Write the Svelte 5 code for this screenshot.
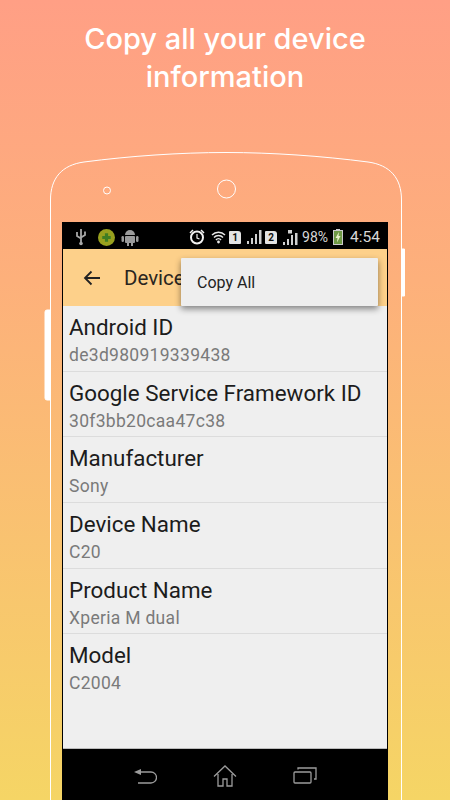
<script>
  let rows = [
    { label: 'Android ID', value: 'de3d980919339438' },
    { label: 'Google Service Framework ID', value: '30f3bb20caa47c38' },
    { label: 'Manufacturer', value: 'Sony' },
    { label: 'Device Name', value: 'C20' },
    { label: 'Product Name', value: 'Xperia M dual' },
    { label: 'Model', value: 'C2004' }
  ];
</script>

<div class="page">
  <h1>Copy all your device<br>information</h1>

  <div class="phone">
    <svg class="outline" width="450" height="648" viewBox="0 0 450 648" fill="none" stroke="#fff">
      <path d="M50.5 648V48C50.5 26 62 13 84 10C130 4 180 0.5 226 0.5C272 0.5 322 4 368 10C390 13 401.500 26 401.500 48V648" />
      <circle cx="107" cy="38.500" r="3.500" />
      <circle cx="226.500" cy="37" r="9" />
      <path d="M402 97h2.500v47H402" fill="#fff" />
      <path d="M50 158h-3a2 2 0 0 0-2 2v86a2 2 0 0 0 2 2h3z" fill="#fff" />
    </svg>

    <div class="screen">
      <div class="status">
        <div class="status-left">
          <svg width="12" height="18" viewBox="0 0 12 18" fill="none" stroke="#a8a8a8" stroke-width="1.800">
            <path d="M6 1v16M2 4v4l4 2.500M10 3.500V7L6 9.500" />
            <circle cx="6" cy="15.500" r="1.800" fill="#a8a8a8" stroke="none" />
          </svg>
          <svg class="ball" width="17" height="17" viewBox="0 0 16 16">
            <circle cx="8" cy="8" r="8" fill="#98a01e" />
            <path d="M6.500 4h3v2.500H12v3H9.500V12h-3V9.500H4v-3h2.500z" fill="#3f7d22" />
          </svg>
          <svg width="18" height="18" viewBox="0 0 18 18" fill="#9b9b9b">
            <path d="M4 7a5 5 0 0 1 10 0z" />
            <rect x="4" y="8" width="10" height="7" rx="1" />
            <rect x="0.500" y="8" width="2.500" height="6" rx="1.200" />
            <rect x="15" y="8" width="2.500" height="6" rx="1.200" />
            <rect x="6" y="14" width="2" height="4" />
            <rect x="10" y="14" width="2" height="4" />
          </svg>
        </div>
        <div class="status-right">
          <svg width="16" height="16" viewBox="0 0 16 16" fill="none" stroke="#f2f2f2">
            <circle cx="8" cy="8.500" r="6" stroke-width="2" />
            <path d="M8 5v4l2.500 1" stroke-width="1.200" />
            <path d="M1 4l3-3M15 4l-3-3" stroke-width="1.500" />
          </svg>
          <svg class="wifi" width="15" height="14" viewBox="0 0 15 14" fill="none" stroke="#e8e8e8" stroke-width="1.400">
            <path d="M1 5a9 9 0 0 1 13 0M3 7.500a6 6 0 0 1 9 0M5 10a3 3 0 0 1 5 0" />
            <circle cx="7.500" cy="12" r="1.400" fill="#e8e8e8" stroke="none" />
          </svg>
          <span class="sim">1</span>
          <svg class="bars" width="15" height="14" viewBox="0 0 15 14" fill="#d0d0d0">
            <rect x="0" y="11" width="2" height="3" />
            <rect x="4" y="8" width="2" height="6" />
            <rect x="8" y="4" width="2" height="10" />
            <rect x="12" y="0" width="2.500" height="14" />
          </svg>
          <span class="sim">2</span>
          <svg class="bars" width="15" height="15" viewBox="0 0 15 15" fill="#d0d0d0">
            <rect x="0" y="12" width="2" height="3" />
            <rect x="4" y="9" width="2" height="6" />
            <rect x="8" y="5" width="2" height="10" />
            <rect x="12" y="3" width="2.500" height="12" />
            <rect x="5" y="0" width="4" height="3.500" />
          </svg>
          <span class="pct">98%</span>
          <svg width="10" height="16" viewBox="0 0 10 16">
            <rect x="3" y="0" width="4" height="2" fill="#ccc" />
            <rect x="0.500" y="1.500" width="9" height="14" fill="#6f9a45" stroke="#ccc" />
            <path d="M6 3L2.500 9h2L4 13.500 7.500 7h-2z" fill="#e8f2c8" />
          </svg>
          <span class="time">4:54</span>
        </div>
      </div>

      <div class="appbar">
        <svg width="18" height="16" viewBox="0 0 18 16" fill="none" stroke="#222" stroke-width="1.800">
          <path d="M17 8H2M8.500 1.500L2 8l6.500 6.500" />
        </svg>
        <span class="title">Device</span>
        <div class="menu">Copy All</div>
      </div>

      <div class="list">
        {#each rows as row}
          <div class="row">
            <div class="label">{row.label}</div>
            <div class="value">{row.value}</div>
          </div>
        {/each}
      </div>

      <div class="nav">
        <svg width="24" height="18" viewBox="0 0 24 18" fill="none" stroke="#9c9c9c" stroke-width="1.300">
          <path d="M6 5h12a5 5 0 0 1 0 11H5" />
          <path d="M1 5l7-3v6z" fill="#9c9c9c" stroke="none" />
        </svg>
        <svg width="24" height="22" viewBox="0 0 24 22" fill="none" stroke="#9c9c9c" stroke-width="1.300">
          <path d="M1 11.500L12 1l11 10.500M5 9v12h5v-7h4v7h5V9" />
        </svg>
        <svg width="24" height="17" viewBox="0 0 24 17" fill="none" stroke="#9c9c9c" stroke-width="1.300">
          <rect x="1" y="5" width="17" height="11" rx="1" />
          <path d="M5 2.500V1h18v11h-2" />
        </svg>
      </div>
    </div>
  </div>
</div>

<style>
  :global(body) {
    margin: 0;
  }

  .page {
    width: 450px;
    height: 800px;
    overflow: hidden;
    background: linear-gradient(180deg, #ff9f85 0%, #fdb07b 35%, #f5d565 100%);
    display: flex;
    flex-direction: column;
  }

  h1 {
    margin: 20px 0 0;
    height: 132px;
    flex: none;
    font-family: Inter, "Open Sans", sans-serif;
    font-size: 29px;
    font-weight: 500;
    line-height: 38px;
    text-align: center;
    color: #fff;
  }

  .phone {
    position: relative;
    height: 648px;
    flex: none;
    box-sizing: border-box;
    padding: 70px 62px 0;
  }

  .outline {
    position: absolute;
    left: 0;
    top: 0;
  }

  .screen {
    position: relative;
    width: 326px;
    height: 578px;
    display: flex;
    flex-direction: column;
    background: #000;
    font-family: Roboto, sans-serif;
  }

  .status {
    height: 27px;
    flex: none;
    display: flex;
    align-items: center;
    justify-content: space-between;
    padding: 3px 8px 0 13px;
    box-sizing: border-box;
    color: #d8d8d8;
  }

  .status-left, .status-right {
    display: flex;
    align-items: center;
  }

  .status-left {
    gap: 6px;
  }

  .ball {
    margin-left: 5px;
  }

  .status-right {
    gap: 3px;
  }

  .wifi {
    margin-left: 3px;
  }

  .sim {
    width: 12px;
    height: 13px;
    border-radius: 1px 3px 1px 1px;
    background: #e4e4e4;
    color: #111;
    font-size: 10px;
    font-weight: 700;
    line-height: 13px;
    text-align: center;
  }

  .bars {
    margin-left: 3px;
  }

  .pct {
    font-size: 14px;
    margin-left: 1px;
    margin-right: 2px;
  }

  .time {
    font-size: 15.500px;
    margin-left: 4px;
  }

  .appbar {
    position: relative;
    height: 57px;
    flex: none;
    margin: 0 1px;
    display: flex;
    align-items: center;
    gap: 23px;
    padding-left: 20px;
    background: #fdd08a;
  }

  .title {
    font-size: 20.500px;
    color: #2a2520;
  }

  .menu {
    position: absolute;
    left: 118px;
    top: 9px;
    width: 197px;
    height: 48px;
    box-sizing: border-box;
    padding: 16px 16px;
    background: #eeeeee;
    border-radius: 1px;
    box-shadow: 0 3px 6px rgba(0, 0, 0, 0.45);
    font-size: 16px;
    line-height: 18px;
    color: #222;
  }

  .list {
    flex: 1;
    margin: 0 1px;
    background: #efefef;
    border-bottom: 1px solid #bbb;
  }

  .row {
    height: 65.700px;
    box-sizing: border-box;
    padding: 7px 6px 0;
    border-bottom: 1px solid #dcdcdc;
  }

  .row:last-child {
    border-bottom: none;
  }

  .label {
    font-size: 22.400px;
    line-height: 28px;
    color: #1c1c1c;
  }

  .value {
    padding-top: 1px;
    font-size: 17.500px;
    line-height: 26px;
    color: #7a7a7a;
    letter-spacing: 0.300px;
  }

  .nav {
    height: 51px;
    flex: none;
    display: flex;
    align-items: center;
    justify-content: center;
    gap: 56px;
    padding-top: 2px;
    box-sizing: border-box;
  }
</style>
